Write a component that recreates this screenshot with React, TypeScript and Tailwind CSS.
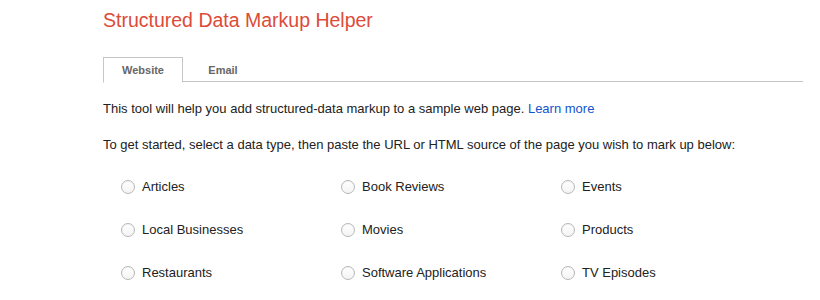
import React, { useState } from 'react';

const types = [
  'Articles', 'Book Reviews', 'Events',
  'Local Businesses', 'Movies', 'Products',
  'Restaurants', 'Software Applications', 'TV Episodes',
];

export default function App() {
  const [tab, setTab] = useState('website');
  const [picked, setPicked] = useState<string | null>(null);

  return (
    <div className="w-[820px] h-[300px] bg-white overflow-hidden font-['Liberation_Sans',Arial,sans-serif] text-[#222]">
      <div className="pl-[103px] pr-[17px] pt-[8px]">
        <h1 className="text-[19.5px] leading-[24px] text-[#dd4b39] font-normal">Structured Data Markup Helper</h1>

        {/* Tabs */}
        <div className="mt-[25px] flex h-[25px] border-b border-[#c6c6c6]">
          <button
            onClick={() => setTab('website')}
            className={`w-[80px] h-[26px] text-[11px] font-bold text-[#666] ${tab === 'website' ? 'border border-[#c6c6c6] border-b-white bg-white' : ''}`}
          >
            Website
          </button>
          <button
            onClick={() => setTab('email')}
            className={`w-[80px] h-[26px] text-[11px] font-bold text-[#666] ${tab === 'email' ? 'border border-[#c6c6c6] border-b-white bg-white' : ''}`}
          >
            Email
          </button>
        </div>

        <p className="mt-[19px] text-[13px] leading-[16px]">
          This tool will help you add structured-data markup to a sample web page.{' '}
          <a className="text-[#1155cc]" href="#">Learn more</a>
        </p>
        <p className="mt-[20px] text-[13px] leading-[16px]">
          To get started, select a data type, then paste the URL or HTML source of the page you wish to mark up below:
        </p>

        <div className="mt-[25px] grid grid-cols-[220px_220px_220px] gap-y-[26px] pl-[18px]">
          {types.map(t => (
            <label key={t} className="flex items-center h-[17px] text-[13px] cursor-pointer" onClick={() => setPicked(t)}>
              <span className="w-[14px] h-[14px] rounded-full border border-[#b8b8b8] bg-gradient-to-b from-white to-[#f4f4f4] flex items-center justify-center shadow-[inset_0_1px_1px_rgba(0,0,0,0.05)]">
                {picked === t && <span className="w-[6px] h-[6px] rounded-full bg-[#555]" />}
              </span>
              <span className="ml-[7px]">{t}</span>
            </label>
          ))}
        </div>
      </div>
    </div>
  );
}
